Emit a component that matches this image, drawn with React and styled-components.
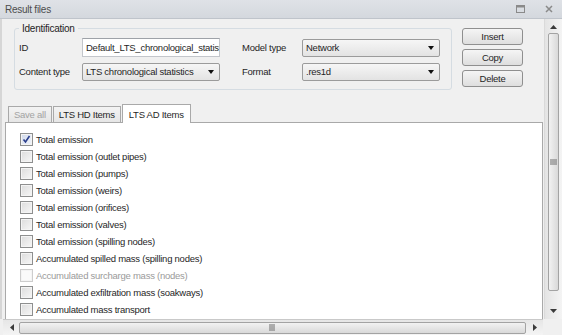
import React from 'react';
import styled, { createGlobalStyle } from 'styled-components';

const Global = createGlobalStyle`
  html, body { margin: 0; padding: 0; background: #f0f0f0; }
  * { box-sizing: border-box; }
`;

const Window = styled.div`
  width: 562px;
  height: 335px;
  background: #f0f0f0;
  display: flex;
  flex-direction: column;
  font-family: "Liberation Sans", Arial, sans-serif;
  font-size: 9.5px;
  letter-spacing: -0.25px;
  color: #1f1f1f;
  overflow: hidden;
`;

const TitleBar = styled.div`
  height: 19px;
  flex: none;
  display: flex;
  align-items: center;
  padding: 0 6px 0 5px;
  background: linear-gradient(#dfe2e7, #d4d8de);
  border-bottom: 1px solid #bfc4cb;
  color: #4d4d4d;
  font-size: 10px;
`;

const Title = styled.div`
  flex: 1;
`;

const TitleIcon = styled.span`
  width: 14px;
  height: 14px;
  margin-left: 15px;
  display: flex;
  align-items: center;
  justify-content: center;
`;

const Body = styled.div`
  flex: 1;
  display: grid;
  grid-template-columns: 1fr 18px;
  grid-template-rows: 1fr 16px;
  min-height: 0;
`;

const Content = styled.div`
  display: flex;
  flex-direction: column;
  padding-left: 3px;
  min-height: 0;
  border-left: 2px solid #d6d6d6;
`;

const TopRow = styled.div`
  display: flex;
  align-items: flex-start;
  padding: 4px 0 0 9px;
`;

const Group = styled.fieldset`
  margin: 0;
  width: 438px;
  flex: none;
  padding: 4px 10px 8px 4px;
  border: 1px solid #d5dce2;
  border-radius: 3px;
`;

const Legend = styled.legend`
  padding: 0 3px;
  margin-left: 0;
  font-size: 10px;
  color: #1f1f1f;
`;

const Fields = styled.div`
  display: grid;
  grid-template-columns: 63px 138px 22px 60px 138px;
  grid-auto-rows: 19px;
  row-gap: 5px;
  align-items: center;
`;

const Label = styled.span`
  grid-column: ${p => p.col};
  white-space: nowrap;
`;

const TextInput = styled.div`
  height: 19px;
  display: flex;
  align-items: center;
  padding-left: 3px;
  background: #fff;
  border: 1px solid #c3c6cb;
  border-top-color: #9ea2a8;
  white-space: nowrap;
  overflow: hidden;
`;

const Select = styled.div`
  grid-column: ${p => p.col};
  height: 18px;
  display: flex;
  align-items: center;
  justify-content: space-between;
  padding: 0 5px 0 3px;
  background: linear-gradient(#f6f6f6, #e3e3e3);
  border: 1px solid #9b9b9b;
  border-radius: 2px;
  white-space: nowrap;
`;

const Caret = styled.span`
  width: 0;
  height: 0;
  flex: none;
  border-left: 3.5px solid transparent;
  border-right: 3.5px solid transparent;
  border-top: 4px solid #111;
`;

const Buttons = styled.div`
  display: flex;
  flex-direction: column;
  gap: 4px;
  margin: 5px 0 0 10px;
`;

const Button = styled.div`
  width: 61px;
  height: 17px;
  display: flex;
  align-items: center;
  justify-content: center;
  background: linear-gradient(#f5f5f5, #dedede);
  border: 1px solid #8f8f8f;
  border-radius: 3px;
`;

const TabStrip = styled.div`
  display: flex;
  align-items: flex-end;
  height: 19px;
  margin-top: 13px;
  padding-left: 3px;
`;

const Tab = styled.div`
  height: ${p => (p.active ? 19 : 16)}px;
  padding: 0 ${p => (p.active ? 6 : 5)}px;
  margin-right: 1px;
  display: flex;
  align-items: center;
  background: ${p => (p.active ? '#fff' : 'linear-gradient(#f3f3f3, #e6e6e6)')};
  border: 1px solid #a9a9a9;
  border-bottom: none;
  color: ${p => (p.disabled ? '#a3a3a3' : '#1f1f1f')};
  position: relative;
  top: ${p => (p.active ? 1 : 0)}px;
`;

const Panel = styled.div`
  flex: 1;
  min-height: 0;
  margin-right: 1px;
  background: #fff;
  border: 1px solid #a9a9a9;
  border-bottom: none;
  padding: 8px 0 0 14px;
  overflow: hidden;
`;

const Item = styled.div`
  height: 17px;
  display: flex;
  align-items: center;
  gap: 3px;
  color: ${p => (p.disabled ? '#9a9a9a' : '#1f1f1f')};
`;

const Box = styled.span`
  width: 13px;
  height: 13px;
  flex: none;
  display: flex;
  align-items: center;
  justify-content: center;
  border: 1px solid ${p => (p.disabled ? '#cdcdcd' : '#8e8f8f')};
  background: ${p =>
    p.disabled
      ? '#fafafa'
      : p.checked
      ? 'linear-gradient(135deg, #cfd8ea, #f2f5fb)'
      : 'linear-gradient(135deg, #dcdcdc, #f7f7f7)'};
  box-shadow: inset 0 0 0 1px #f4f4f4;
`;

const VScroll = styled.div`
  display: flex;
  flex-direction: column;
  align-items: center;
  background: linear-gradient(90deg, #e4e4e4, #f4f4f4);
  border-left: 1px solid #dadada;
  padding: 2px 0 3px;
`;

const HScroll = styled.div`
  display: flex;
  align-items: center;
  margin-left: 3px;
  margin-right: 1px;
  background: linear-gradient(#e6e6e6, #f4f4f4);
  border-top: 1px solid #c9c9c9;
  padding: 0 3px;
`;

const Corner = styled.div`
  background: #f0f0f0;
`;

const Arrow = styled.span`
  width: ${p => (p.vertical ? 14 : 11)}px;
  height: ${p => (p.vertical ? 11 : 14)}px;
  flex: none;
  display: flex;
  align-items: center;
  justify-content: center;
`;

const ThumbV = styled.div`
  width: 11px;
  flex: 1;
  margin: 1px 0 14px;
  display: flex;
  align-items: center;
  justify-content: center;
  background: linear-gradient(90deg, #f2f2f2, #d9d9d9);
  border: 1px solid #a3a3a3;
  border-radius: 2px;
`;

const ThumbH = styled.div`
  height: 12px;
  flex: 1;
  margin: 0 3px 0 2px;
  display: flex;
  align-items: center;
  justify-content: center;
  background: linear-gradient(#f2f2f2, #d9d9d9);
  border: 1px solid #a3a3a3;
  border-radius: 2px;
`;

const Tri = ({ dir }) => {
  const pts = {
    up: '0,4 3.5,0 7,4',
    down: '0,0 7,0 3.5,4',
    left: '4,0 4,7 0,3.5',
    right: '0,0 0,7 4,3.5',
  }[dir];
  const vert = dir === 'up' || dir === 'down';
  return (
    <svg width={vert ? 7 : 4} height={vert ? 4 : 7} viewBox={vert ? '0 0 7 4' : '0 0 4 7'}>
      <polygon points={pts} fill="#3a3a3a" />
    </svg>
  );
};

const Grip = ({ vertical }) => (
  <svg width="7" height="7" viewBox="0 0 7 7">
    {[0, 2, 4].map(o =>
      vertical ? (
        <rect key={o} x="0" y={o + 0.5} width="7" height="1" fill="#6f6f6f" />
      ) : (
        <rect key={o} x={o + 0.5} y="0" width="1" height="7" fill="#6f6f6f" />
      )
    )}
  </svg>
);

const Check = () => (
  <svg width="9" height="9" viewBox="0 0 9 9">
    <path d="M1.5 4.5 L3.5 7 L7.5 1" stroke="#2b3f8c" strokeWidth="1.6" fill="none" />
  </svg>
);

const items = [
  { label: 'Total emission', checked: true },
  { label: 'Total emission (outlet pipes)' },
  { label: 'Total emission (pumps)' },
  { label: 'Total emission (weirs)' },
  { label: 'Total emission (orifices)' },
  { label: 'Total emission (valves)' },
  { label: 'Total emission (spilling nodes)' },
  { label: 'Accumulated spilled mass (spilling nodes)' },
  { label: 'Accumulated surcharge mass (nodes)', disabled: true },
  { label: 'Accumulated exfiltration mass (soakways)' },
  { label: 'Accumulated mass transport' },
];

export default function App() {
  return (
    <Window>
      <Global />
      <TitleBar>
        <Title>Result files</Title>
        <TitleIcon>
          <svg width="9" height="8" viewBox="0 0 9 8">
            <rect x="0.5" y="0.5" width="8" height="7" fill="none" stroke="#8a8a8a" />
            <rect x="0.5" y="0.5" width="8" height="2" fill="#8a8a8a" />
          </svg>
        </TitleIcon>
        <TitleIcon>
          <svg width="8" height="8" viewBox="0 0 8 8">
            <path d="M1 1 L7 7 M7 1 L1 7" stroke="#8a8a8a" strokeWidth="1.5" />
          </svg>
        </TitleIcon>
      </TitleBar>
      <Body>
        <Content>
          <TopRow>
            <Group>
              <Legend>Identification</Legend>
              <Fields>
                <Label col={1}>ID</Label>
                <TextInput>Default_LTS_chronological_statistics</TextInput>
                <Label col={4}>Model type</Label>
                <Select col={5}>Network<Caret /></Select>
                <Label col={1}>Content type</Label>
                <Select col={2}>LTS chronological statistics<Caret /></Select>
                <Label col={4}>Format</Label>
                <Select col={5}>.res1d<Caret /></Select>
              </Fields>
            </Group>
            <Buttons>
              <Button>Insert</Button>
              <Button>Copy</Button>
              <Button>Delete</Button>
            </Buttons>
          </TopRow>
          <TabStrip>
            <Tab disabled>Save all</Tab>
            <Tab>LTS HD Items</Tab>
            <Tab active>LTS AD Items</Tab>
          </TabStrip>
          <Panel>
            {items.map(it => (
              <Item key={it.label} disabled={it.disabled}>
                <Box checked={it.checked} disabled={it.disabled}>
                  {it.checked && <Check />}
                </Box>
                {it.label}
              </Item>
            ))}
          </Panel>
        </Content>
        <VScroll>
          <Arrow vertical><Tri dir="up" /></Arrow>
          <ThumbV><Grip vertical /></ThumbV>
          <Arrow vertical><Tri dir="down" /></Arrow>
        </VScroll>
        <HScroll>
          <Arrow><Tri dir="left" /></Arrow>
          <ThumbH><Grip /></ThumbH>
          <Arrow><Tri dir="right" /></Arrow>
        </HScroll>
        <Corner />
      </Body>
    </Window>
  );
}
